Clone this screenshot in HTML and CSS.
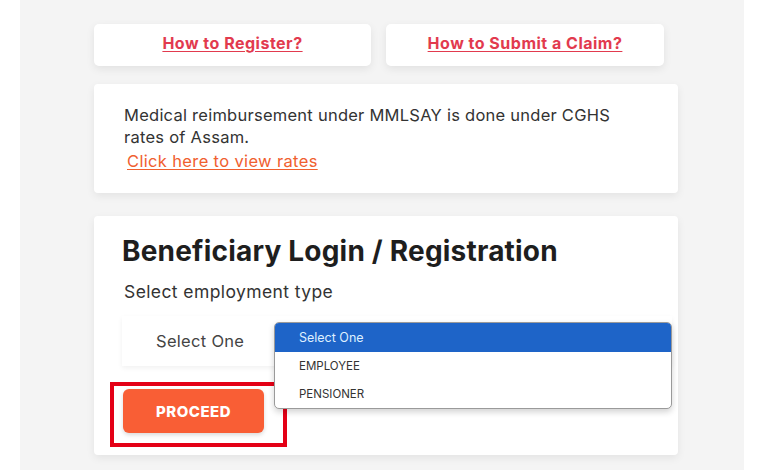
FILE: index.html
```html
<!DOCTYPE html>
<html>
<head>
<meta charset="utf-8">
<link rel="stylesheet" href="styles.css">
</head>
<body>
<div class="panel">
  <div class="links">
    <div class="link-card w1"><a href="#">How to Register?</a></div>
    <div class="link-card w2"><a href="#">How to Submit a Claim?</a></div>
  </div>
  <div class="info-card">
    <p>Medical reimbursement under MMLSAY is done under CGHS rates of Assam.</p>
    <a class="rates" href="#">Click here to view rates</a>
  </div>
  <div class="login-card">
    <h1>Beneficiary Login / Registration</h1>
    <div class="label">Select employment type</div>
    <div class="select-wrap">
      <div class="select">Select One</div>
      <ul class="dropdown">
        <li class="active">Select One</li>
        <li>EMPLOYEE</li>
        <li>PENSIONER</li>
      </ul>
    </div>
    <div class="btn-wrap">
      <button class="proceed">PROCEED</button>
      <div class="highlight"></div>
    </div>
  </div>
</div>
</body>
</html>
```
FILE: styles.css
```css
* { box-sizing: border-box; }
html, body { margin: 0; padding: 0; background: #ffffff; }
body { font-family: Inter, "Open Sans", sans-serif; color: #333; }
.panel {
  margin-left: 20px;
  width: 724px;
  height: 470px;
  background: #f4f4f4;
  padding: 24px 0 0 74px;
  overflow: hidden;
}
.links { display: flex; gap: 15px; }
.link-card {
  height: 42px;
  background: #fff;
  border-radius: 5px;
  box-shadow: 0 3px 8px rgba(0,0,0,0.08);
  display: flex;
  align-items: center;
  justify-content: center;
  padding-bottom: 4px;
}
.w1 { width: 277px; }
.w2 { width: 278px; }
.link-card a {
  color: #e23a4e;
  font-weight: 700;
  font-size: 16px;
  letter-spacing: 0.5px;
  text-decoration: underline;
  text-underline-offset: 2px;
}
.info-card {
  margin-top: 18px;
  width: 584px;
  height: 109px;
  background: #fff;
  border-radius: 4px;
  box-shadow: 0 3px 8px rgba(0,0,0,0.07);
  padding: 20px 50px 0 30px;
}
.info-card p {
  margin: 0;
  font-size: 16.5px;
  letter-spacing: 0.25px;
  line-height: 22px;
  color: #333;
}
.rates {
  display: inline-block;
  margin: 3px 0 0 3px;
  color: #f0602f;
  font-size: 16.5px;
  letter-spacing: 0.35px;
  text-decoration: underline;
  text-underline-offset: 2px;
}
.login-card {
  margin-top: 23px;
  width: 584px;
  height: 239px;
  background: #fff;
  border-radius: 4px;
  box-shadow: 0 3px 8px rgba(0,0,0,0.07);
  padding: 18px 6px 0 28px;
}
h1 {
  margin: 0;
  font-size: 28px;
  line-height: 34px;
  font-weight: 700;
  color: #1e1e1e;
  letter-spacing: 0.2px;
}
.label {
  margin: 12px 0 0 2px;
  font-size: 17.5px;
  letter-spacing: 0.4px;
  line-height: 24px;
  color: #333;
}
.select-wrap { position: relative; margin-top: 12px; }
.select {
  width: 550px;
  height: 50px;
  background: #fff;
  box-shadow: 0 2px 5px rgba(0,0,0,0.06);
  padding-left: 34px;
  display: flex;
  align-items: center;
  font-size: 16.5px;
  letter-spacing: 0.3px;
  color: #444;
}
.dropdown {
  position: absolute;
  left: 152px;
  top: 6px;
  width: 398px;
  height: 87px;
  margin: 0;
  padding: 0;
  list-style: none;
  background: #fff;
  border: 1px solid #9a9a9a;
  border-radius: 5px;
  overflow: hidden;
  box-shadow: 0 3px 6px rgba(0,0,0,0.18);
  z-index: 2;
}
.dropdown li {
  height: 28px;
  padding-left: 24px;
  display: flex;
  align-items: center;
  font-size: 11.5px;
  color: #333;
}
.dropdown li.active {
  height: 29px;
  background: #1e64c8;
  color: #dfefff;
  font-size: 12.5px;
}
.btn-wrap {
  position: relative;
  margin-top: 23px;
  margin-left: 1px;
  width: 141px;
}
.proceed {
  width: 141px;
  height: 44px;
  border: none;
  border-radius: 6px;
  background: #f95e35;
  color: #fff;
  font-family: Inter, sans-serif;
  font-weight: 800;
  font-size: 15px;
  letter-spacing: 0.5px;
  box-shadow: 0 2px 4px rgba(0,0,0,0.15);
}
.highlight {
  position: absolute;
  left: -13px;
  top: -7px;
  width: 177px;
  height: 65px;
  border: 4px solid #e40016;
  pointer-events: none;
}
```
